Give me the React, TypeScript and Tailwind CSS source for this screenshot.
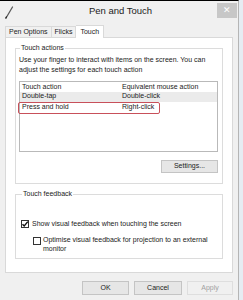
import React from "react";

// Windows 8 "Pen and Touch" dialog, Touch tab
const PenIcon = () => (
  <svg width="10" height="14" viewBox="0 0 10 14" className="block">
    <path d="M2 13 L8.5 2" stroke="#5a5a5a" strokeWidth="1.3" strokeLinecap="round" />
    <path d="M1.6 13.4 L2.6 11.4" stroke="#222" strokeWidth="1.2" />
  </svg>
);

const CheckBox = ({ checked }: { checked?: boolean }) => (
  <span className="relative w-[8px] h-[8px] shrink-0 border border-[#333] bg-white flex items-center justify-center">
    {checked && (
      <svg width="8" height="8" viewBox="0 0 8 8" className="absolute -left-[1px] -top-[1px]">
        <path d="M1.5 4.2 L3.2 6 L6.8 1.6" stroke="#111" strokeWidth="1.4" fill="none" />
      </svg>
    )}
  </span>
);

const DialogButton = ({ label, width, disabled }: { label: string; width: string; disabled?: boolean }) => (
  <button
    className={`${width} h-[14px] flex items-center justify-center border text-[7px] ${
      disabled
        ? "border-[#dedede] bg-[#f0f0f0] text-[#a0a0a0]"
        : "border-[#c4c4c4] bg-[#e6e6e6] text-[#222]"
    }`}
  >
    {label}
  </button>
);

export default function App() {
  return (
    <div className="w-[243px] h-[300px] bg-[#e6ecf2] flex font-['Liberation_Sans',sans-serif] text-[7px] text-[#222]">
      <div className="w-[239px] h-full bg-[#f0f0f0] border-t border-t-black border-r border-r-[#b5b5b5] flex flex-col">
        {/* Title bar */}
        <div className="h-[21px] shrink-0 flex items-center pl-[4px] pr-[1px]">
          <PenIcon />
          <div className="flex-1 text-center text-[9.5px] text-[#222] pl-[10px]">Pen and Touch</div>
          <div className="w-[20px] h-[15px] -mt-[3px] bg-[#c7c7c7] flex items-center justify-center text-white text-[9px] leading-none">
            ✕
          </div>
        </div>

        {/* Tabs */}
        <div className="flex items-end h-[15px] pl-[5px]">
          <div className="h-[11px] px-[3px] border border-[#d9d9d9] border-b-0 bg-[#f0f0f0] flex items-center">
            Pen Options
          </div>
          <div className="h-[11px] px-[3px] border border-l-0 border-[#d9d9d9] border-b-0 bg-[#f0f0f0] flex items-center">
            Flicks
          </div>
          <div className="h-[13px] px-[4px] border border-l-0 border-[#d9d9d9] border-b-0 bg-white flex items-center relative -mb-[1px] z-10">
            Touch
          </div>
        </div>

        {/* Tab panel */}
        <div className="ml-[5px] w-[228px] h-[236px] bg-white border border-[#d9d9d9] px-[9px] pt-[5px] flex flex-col">
          <fieldset className="border border-[#dcdcdc] h-[141px] pl-[3px] pr-[4px]">
            <legend className="px-[1px] ml-[1px]">Touch actions</legend>
            <p className="leading-[10px] mt-[1px]">
              Use your finger to interact with items on the screen. You can adjust the settings for each touch action
            </p>
            <div className="mt-[6px] h-[71px] border border-[#b9b9b9] pt-[1px]">
              <div className="flex h-[9px] items-center pl-[2px]">
                <span className="w-[100px]">Touch action</span>
                <span>Equivalent mouse action</span>
              </div>
              <div className="flex h-[10px] items-center pl-[2px] bg-[#ebebeb]">
                <span className="w-[100px]">Double-tap</span>
                <span>Double-click</span>
              </div>
              <div className="flex h-[12px] w-[142px] -ml-[2px] items-center pl-[3px] border border-[#c8505a] rounded-[2px]">
                <span className="w-[100px]">Press and hold</span>
                <span>Right-click</span>
              </div>
            </div>
            <div className="flex justify-end mt-[8px]">
              <button className="w-[57px] h-[13px] border border-[#c4c4c4] bg-[#e6e6e6] flex items-center justify-center">
                Settings...
              </button>
            </div>
          </fieldset>

          <fieldset className="mt-[5px] border border-[#dcdcdc] h-[70px] pl-[5px] pr-[4px]">
            <legend className="px-[1px] ml-[1px]">Touch feedback</legend>
            <label className="flex items-center gap-[3px] mt-[19px]">
              <CheckBox checked />
              <span>Show visual feedback when touching the screen</span>
            </label>
            <label className="flex items-start gap-[2px] mt-[6px] pl-[12px]">
              <span className="mt-[2px]">
                <CheckBox />
              </span>
              <span className="leading-[9px]">
                Optimise visual feedback for projection to an external monitor
              </span>
            </label>
          </fieldset>
        </div>

        {/* Dialog buttons */}
        <div className="flex justify-end gap-[5px] mt-[8px] pr-[5px]">
          <DialogButton label="OK" width="w-[47px]" />
          <DialogButton label="Cancel" width="w-[48px]" />
          <DialogButton label="Apply" width="w-[46px]" disabled />
        </div>
      </div>
    </div>
  );
}
